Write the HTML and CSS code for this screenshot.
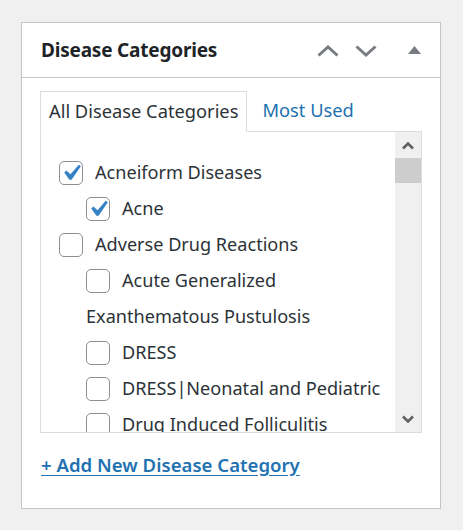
FILE: index.html
```html
<!DOCTYPE html>
<html lang="en">
<head>
<meta charset="utf-8">
<title>Disease Categories</title>
<link rel="stylesheet" href="styles.css">
</head>
<body>
<div class="postbox">
  <div class="postbox-header">
    <h2 class="hndle">Disease Categories</h2>
    <div class="handle-actions">
      <span class="hbtn"><svg width="22" height="12" viewBox="0 0 22 12"><path d="M1.5 10.5 L11 2 L20.5 10.5" fill="none" stroke="#787c82" stroke-width="3"/></svg></span>
      <span class="hbtn"><svg width="22" height="12" viewBox="0 0 22 12"><path d="M1.5 1.5 L11 10 L20.5 1.5" fill="none" stroke="#787c82" stroke-width="3"/></svg></span>
      <span class="hbtn tri"><svg width="13" height="8" viewBox="0 0 13 8"><path d="M6.5 0 L13 8 L0 8 Z" fill="#787c82"/></svg></span>
    </div>
  </div>
  <div class="inside">
    <ul class="tabs">
      <li class="tab active">All Disease Categories</li>
      <li class="tab"><a href="#">Most Used</a></li>
    </ul>
    <div class="tabs-panel">
      <ul class="checklist">
        <li><label><span class="cb checked"><svg viewBox="0 0 20 20"><path d="M14.83 4.89l1.34.94-5.81 8.38H9.02L5.78 9.670l1.34-1.25 2.57 2.4z"/></svg></span>Acneiform Diseases</label>
          <ul class="children">
            <li><label><span class="cb checked"><svg viewBox="0 0 20 20"><path d="M14.83 4.89l1.34.94-5.81 8.38H9.02L5.78 9.67l1.34-1.25 2.57 2.4z"/></svg></span>Acne</label></li>
          </ul>
        </li>
        <li><label><span class="cb"></span>Adverse Drug Reactions</label>
          <ul class="children">
            <li><label><span class="cb"></span>Acute Generalized Exanthematous Pustulosis</label></li>
            <li><label><span class="cb"></span>DRESS</label></li>
            <li><label><span class="cb"></span>DRESS|Neonatal and Pediatric</label></li>
            <li><label><span class="cb"></span>Drug Induced Folliculitis</label></li>
          </ul>
        </li>
      </ul>
      <div class="scrollbar">
        <span class="sb-arrow"><svg width="12" height="9" viewBox="0 0 12 9"><path d="M1 7.5 L6 2.5 L11 7.5" fill="none" stroke="#606060" stroke-width="2.6"/></svg></span>
        <span class="sb-thumb"></span>
        <span class="sb-track"></span>
        <span class="sb-arrow"><svg width="12" height="9" viewBox="0 0 12 9"><path d="M1 1.5 L6 6.5 L11 1.5" fill="none" stroke="#606060" stroke-width="2.6"/></svg></span>
      </div>
    </div>
    <a class="add-new" href="#">+ Add New Disease Category</a>
  </div>
</div>
</body>
</html>
```
FILE: styles.css
```css
* { box-sizing: border-box; }
html, body { margin: 0; padding: 0; }
body {
  background: #f0f0f1;
  font-family: "Noto Sans", "Open Sans", sans-serif;
  color: #2c3338;
  width: 463px;
  height: 530px;
  overflow: hidden;
}
.postbox {
  margin: 22px 0 0 21px;
  width: 420px;
  height: 487px;
  background: #fff;
  border: 1px solid #c3c4c7;
}
.postbox-header {
  height: 55px;
  border-bottom: 1px solid #c3c4c7;
  display: flex;
  align-items: center;
  justify-content: space-between;
  padding: 0 19px 0 19px;
}
.hndle {
  margin: 0;
  font-size: 19px;
  font-weight: 700;
  color: #1d2327;
  letter-spacing: -0.2px;
}
.handle-actions {
  display: flex;
  align-items: center;
  gap: 16px;
  padding-top: 1px;
}
.hbtn { display: flex; }
.hbtn.tri { margin-left: 15px; margin-bottom: 2px; }
.inside {
  padding: 13px 18px 0 18px;
}
.tabs {
  list-style: none;
  margin: 0;
  padding: 0;
  display: flex;
  align-items: flex-start;
  height: 40px;
}
.tab {
  font-size: 18.3px;
  height: 40px;
  line-height: 38px;
  padding: 0 8px;
}
.tab.active {
  position: relative;
  z-index: 1;
  height: 41px;
  background: #fff;
  border: 1px solid #dcdcde;
  border-bottom-color: #fff;
  color: #2c3338;
}
.tab a {
  display: block;
  color: #2271b1;
  text-decoration: none;
  padding-left: 7px;
}
.tabs-panel {
  display: flex;
  height: 302px;
  border: 1px solid #dcdcde;
  overflow: hidden;
}
.checklist {
  flex: 1;
  list-style: none;
  margin: 0;
  padding: 22px 10px 0 18px;
  overflow: hidden;
  font-size: 18.1px;
  line-height: 36px;
}
.checklist ul {
  list-style: none;
  margin: 0;
  padding: 0 0 0 27px;
}
.checklist li { margin: 0; }
.checklist label { display: block; }
.cb {
  display: inline-block;
  width: 24px;
  height: 24px;
  border: 1px solid #8c8f94;
  border-radius: 5px;
  background: #fff;
  vertical-align: middle;
  margin: -3px 12px 0 0;
  position: relative;
}
.cb svg {
  position: absolute;
  left: -5px;
  top: -5px;
  width: 32px;
  height: 32px;
  fill: #3582c4;
}
.scrollbar {
  width: 26px;
  background: #f0f0f0;
  display: flex;
  flex-direction: column;
  align-items: stretch;
}
.sb-arrow {
  height: 26px;
  display: flex;
  align-items: center;
  justify-content: center;
}
.sb-thumb {
  height: 25px;
  background: #cdcdcd;
}
.sb-track { flex: 1; }
.add-new {
  display: inline-block;
  margin-top: 19px;
  margin-left: 1px;
  font-size: 18.6px;
  font-weight: 600;
  color: #2271b1;
  text-decoration: underline;
  text-underline-offset: 3px;
}
```
